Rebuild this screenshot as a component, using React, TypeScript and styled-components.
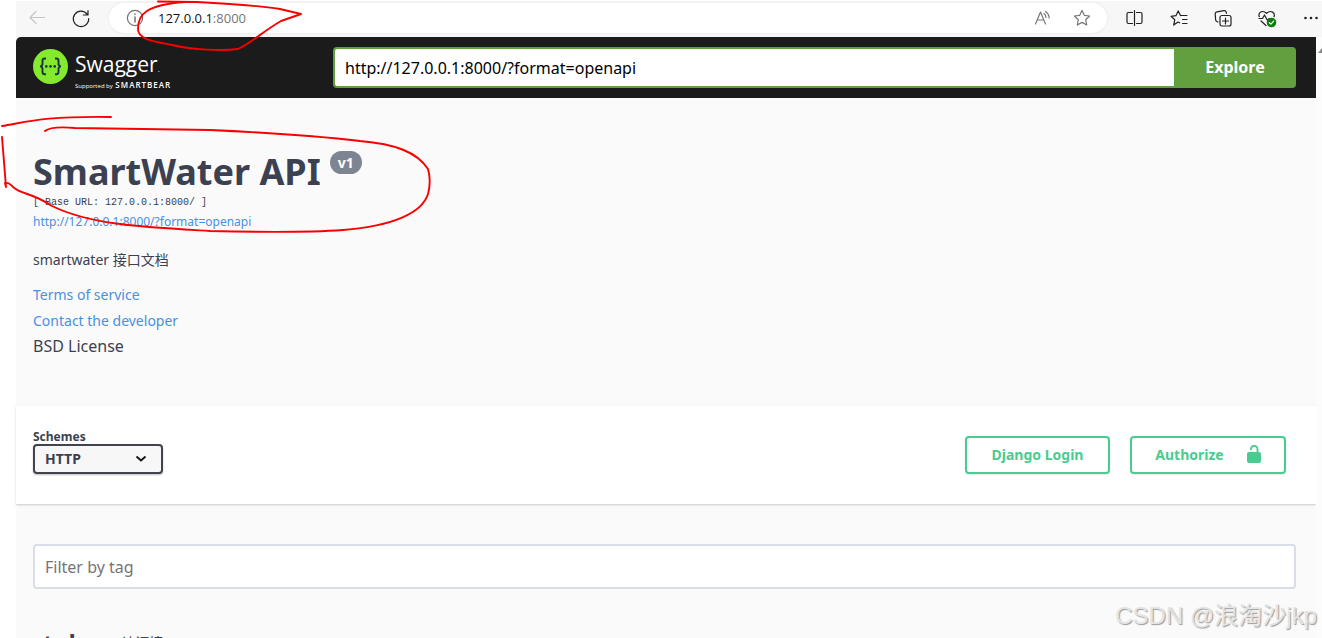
import React from 'react';
import styled, { createGlobalStyle } from 'styled-components';

const GlobalStyle = createGlobalStyle`
  * { box-sizing: border-box; }
  html { overflow: hidden; }
  body {
    margin: 0;
    background: #fff;
    color: #3b4151;
    font-family: "Noto Sans", "Noto Sans CJK SC", sans-serif;
  }
  button, input, select { font-family: inherit; }
`;

const Page = styled.div`
  position: relative;
  height: 100vh;
  overflow: hidden;
  padding: 1px 0 0 16px;
`;

const BrowserBar = styled.header`
  display: flex;
  align-items: center;
  height: 36px;
  padding: 0 1px 0 11px;
  background: #f7f7f7;
`;

const IconButton = styled.button<{ $gap?: number }>`
  display: flex;
  align-items: center;
  justify-content: center;
  flex: none;
  width: 20px;
  height: 20px;
  margin-right: ${(p) => p.$gap ?? 0}px;
  padding: 0;
  border: 0;
  background: none;
`;

const AddressBar = styled.div`
  display: flex;
  align-items: center;
  flex: 1;
  height: 30px;
  margin: 0 17px 2px 0;
  padding: 0 15px 0 16px;
  border-radius: 15px;
  background: #fff;
  box-shadow: 0 0 3px rgba(0, 0, 0, 0.08);
`;

const Address = styled.span`
  flex: 1;
  margin-left: 13px;
  color: #767676;
  font-family: "Open Sans", sans-serif;
  font-size: 13px;
  b { color: #111; font-weight: 400; }
`;

const Row = styled.div`
  display: flex;
`;

const Document = styled.div`
  flex: 1;
  min-width: 0;
  background: #fafafa;
`;

const ScrollTrack = styled.div`
  width: 6px;
  padding-top: 11px;
  overflow: hidden;
  background: #fcfcfc;
  svg { display: block; }
`;

const TopBar = styled.div`
  display: flex;
  align-items: center;
  height: 61px;
  padding: 0 20px 0 17px;
  border-top-left-radius: 5px;
  background: #1b1b1b;
`;

const Brand = styled.a`
  display: flex;
  width: 300px;
  gap: 7px;
  color: #fff;
  text-decoration: none;
`;

const BrandText = styled.span`
  display: flex;
  flex-direction: column;
  padding-top: 6px;
`;

const BrandName = styled.span`
  font-family: "Open Sans", sans-serif;
  font-size: 21px;
  line-height: 24px;
  small { font-size: 8px; }
`;

const BrandNote = styled.span`
  font-family: "Open Sans", sans-serif;
  font-size: 6px;
  line-height: 8px;
  white-space: nowrap;
  b { margin-left: 1px; font-size: 8px; font-weight: 600; letter-spacing: 1px; }
`;

const SpecForm = styled.form`
  display: flex;
  flex: 1;
  height: 41px;
`;

const SpecInput = styled.input`
  flex: 1;
  min-width: 0;
  padding: 0 10px;
  border: 2px solid #62a03f;
  border-right: 0;
  border-radius: 4px 0 0 4px;
  background: #fff;
  color: #000;
  font-size: 16px;
`;

const ExploreButton = styled.button`
  width: 122px;
  padding: 0 0 2px;
  border: 0;
  border-radius: 0 4px 4px 0;
  background: #62a03f;
  color: #fff;
  font-size: 16px;
  font-weight: 700;
`;

const Info = styled.section`
  display: flex;
  flex-direction: column;
  align-items: flex-start;
  height: 308px;
  padding: 50px 17px 0;
`;

const Title = styled.h1`
  display: flex;
  align-items: flex-start;
  gap: 9px;
  margin: 0;
  font-size: 36px;
  line-height: 48px;
  font-weight: 700;
`;

const Version = styled.small`
  height: 23px;
  margin-top: 3px;
  padding: 0 8px;
  border-radius: 12px;
  background: #7d8492;
  color: #fff;
  font-size: 14px;
  line-height: 23px;
`;

const BaseUrl = styled.pre`
  margin: 0;
  font-family: "Liberation Mono", monospace;
  font-size: 10px;
  line-height: 14px;
`;

const TextLink = styled.a<{ $size: number; $line: number }>`
  color: #4990e2;
  font-size: ${(p) => p.$size}px;
  line-height: ${(p) => p.$line}px;
  text-decoration: none;
`;

const Description = styled.p`
  margin: 16px 0 12px;
  font-size: 14px;
  line-height: 20px;
`;

const License = styled.span`
  font-size: 16px;
  line-height: 24px;
`;

const SchemeBar = styled.section`
  display: flex;
  justify-content: space-between;
  height: 98px;
  padding: 24px 30px 0 17px;
  background: #fff;
  box-shadow: 0 1px 2px rgba(0, 0, 0, 0.2);
`;

const SchemeLabel = styled.label`
  display: flex;
  flex-direction: column;
  font-size: 12px;
  line-height: 14px;
  font-weight: 700;
`;

const SelectWrap = styled.span`
  display: grid;
  align-items: center;
  width: 130px;
  height: 30px;
  > * { grid-area: 1 / 1; }
  svg { justify-self: end; margin-right: 16px; pointer-events: none; }
`;

const SchemeSelect = styled.select`
  appearance: none;
  width: 100%;
  height: 30px;
  padding: 0 10px 2px;
  border: 2px solid #41444e;
  border-radius: 4px;
  background: #f7f7f7;
  box-shadow: 0 1px 2px rgba(0, 0, 0, 0.25);
  color: #3b4151;
  font-size: 14px;
  font-weight: 700;
`;

const Actions = styled.div`
  display: flex;
  gap: 20px;
  margin-top: 6px;
`;

const OutlineButton = styled.button<{ $width: number }>`
  display: flex;
  align-items: center;
  justify-content: center;
  gap: 23px;
  width: ${(p) => p.$width}px;
  height: 38px;
  padding: 0 0 2px;
  border: 2px solid #49cc90;
  border-radius: 4px;
  background: #fff;
  box-shadow: 0 1px 2px rgba(0, 0, 0, 0.1);
  color: #49cc90;
  font-size: 14px;
  font-weight: 700;
`;

const Operations = styled.section`
  padding: 40px 20px 0 17px;
`;

const FilterInput = styled.input`
  display: block;
  width: 100%;
  height: 45px;
  padding: 0 10px;
  border: 2px solid #d8dde7;
  border-radius: 4px;
  background: #fff;
  font-size: 16px;
  &::placeholder { color: #757575; opacity: 1; }
`;

const Tag = styled.h2`
  display: flex;
  align-items: center;
  gap: 8px;
  margin: 36px 0 0;
  padding: 0 10px;
  font-size: 24px;
  line-height: 36px;
  small { font-size: 14px; font-weight: 400; }
`;

const Annotations = styled.svg`
  position: absolute;
  top: 0;
  left: 0;
  pointer-events: none;
`;

const Watermark = styled.span`
  position: absolute;
  right: 5px;
  bottom: 4px;
  color: #e4e4e4;
  font-family: "Liberation Sans", "Noto Sans CJK SC", sans-serif;
  font-size: 24px;
  line-height: 36px;
  text-shadow: 1px 1px 1px #999;
`;

type IconProps = { children: React.ReactNode; color?: string; size?: number };
const Icon = ({ children, color = '#222', size = 20 }: IconProps) => (
  <svg width={size} height={size} viewBox="0 0 20 20" fill="none" stroke={color} strokeWidth="1.2" strokeLinecap="round" strokeLinejoin="round" aria-hidden="true">
    {children}
  </svg>
);

const star = 'M10 2.4l2.3 4.9 5.3.7-3.9 3.7 1 5.3-4.7-2.6L5.3 17l1-5.3L2.4 8l5.3-.7z';

export default function App() {
  return (
    <>
      <GlobalStyle />
      <Page>
        <BrowserBar>
          <IconButton $gap={24} aria-label="Back">
            <Icon color="#c6c6c6"><path d="M17.500 8.500H3M9 2.500L3 8.500l6 6" /></Icon>
          </IconButton>
          <IconButton $gap={18} aria-label="Reload">
            <Icon><path d="M16.300 5.400A7.700 7.700 0 1 0 17.700 9.500M17 1.500v4.500h-4.600" /></Icon>
          </IconButton>
          <AddressBar>
            <IconButton aria-label="Site information">
              <Icon color="#707070"><circle cx="10" cy="10" r="7.6" /><path d="M10 9v5M10 6v.4" strokeWidth="1.5" /></Icon>
            </IconButton>
            <Address><b>127.0.0.1</b>:8000</Address>
            <IconButton $gap={20} aria-label="Read aloud">
              <Icon color="#767676"><path d="M3.500 16L8.500 4l5 12M5.200 12h6.600M12 5.500q2 1.600 2 4M13.500 3.500q3.600 2.500 3.600 6.500" /></Icon>
            </IconButton>
            <IconButton aria-label="Add to favorites">
              <Icon color="#767676"><path d={star} /></Icon>
            </IconButton>
          </AddressBar>
          <IconButton $gap={25} aria-label="Split screen">
            <Icon><path d="M8.500 3.500h-4A1.500 1.500 0 0 0 3 5v8a1.500 1.500 0 0 0 1.500 1.500h4M12.500 3.500h4A1.500 1.500 0 0 1 18 5v8a1.500 1.500 0 0 1-1.500 1.500h-4M10.500 1.500v15" /></Icon>
          </IconButton>
          <IconButton $gap={24} aria-label="Favorites">
            <Icon><path d="M12 6.500h6M13.500 10.500h4.500M13.500 14.500h4.500M10.700 13.800L9 13 4.700 16.100 5.800 10.700 2 7.300 6.900 6.700 9.200 1.900 11.500 6.500" /></Icon>
          </IconButton>
          <IconButton $gap={24} aria-label="Collections">
            <Icon><rect x="7" y="6.500" width="11" height="10.500" rx="2" /><path d="M12.500 9v6M9.500 12h6M5 13L3.800 12.500A2 2 0 0 1 2.600 10.500L2.200 5A2 2 0 0 1 4 2.800L11 1.700A2 2 0 0 1 13.200 3.300L13.500 4.300" /></Icon>
          </IconButton>
          <IconButton $gap={24} aria-label="Browser essentials">
            <Icon>
              <path d="M2.300 7.700C.8 4 5 .3 9.500 4.300 14 .3 18.500 4 17 7.700M2 9.500h3.500L7.500 6l3 5.500L12 9.500h2M4 12l5 4.500" />
              <circle cx="14.500" cy="13.500" r="4.800" fill="#107c10" stroke="none" />
              <path d="M12.400 13.700l1.500 1.400 2.800-2.900" stroke="#fff" />
            </Icon>
          </IconButton>
          <IconButton aria-label="More">
            <Icon><g fill="#222" stroke="none"><circle cx="4.500" cy="9" r="1.300" /><circle cx="10" cy="9" r="1.300" /><circle cx="15.500" cy="9" r="1.300" /></g></Icon>
          </IconButton>
        </BrowserBar>
        <Row>
          <Document>
            <TopBar>
              <Brand href="#">
                <svg width="35" height="42" viewBox="0 -3 35 42" aria-hidden="true">
                  <circle cx="17.500" cy="17.500" r="17.500" fill="#85ea2d" />
                  <g fill="none" stroke="#173647" strokeWidth="1.900">
                    <path d="M13 9.500h-1.200q-2.300 0-2.300 2.300v3q0 2.600-2.500 2.600 2.500 0 2.500 2.600v3q0 2.300 2.300 2.300H13M22 9.500h1.200q2.300 0 2.300 2.300v3q0 2.600 2.500 2.600-2.500 0-2.500 2.600v3q0 2.300-2.300 2.300H22" />
                  </g>
                  <g fill="#173647"><circle cx="13.300" cy="17.400" r="1.300" /><circle cx="17.500" cy="17.400" r="1.300" /><circle cx="21.700" cy="17.400" r="1.300" /></g>
                </svg>
                <BrandText>
                  <BrandName>Swagger<small>.</small></BrandName>
                  <BrandNote>Supported by <b>SMARTBEAR</b></BrandNote>
                </BrandText>
              </Brand>
              <SpecForm onSubmit={(e) => e.preventDefault()}>
                <SpecInput aria-label="Specification URL" defaultValue="http://127.0.0.1:8000/?format=openapi" />
                <ExploreButton>Explore</ExploreButton>
              </SpecForm>
            </TopBar>
            <Info>
              <Title>SmartWater API<Version>v1</Version></Title>
              <BaseUrl>[ Base URL: 127.0.0.1:8000/ ]</BaseUrl>
              <TextLink $size={12} $line={24} href="#">http://127.0.0.1:8000/?format=openapi</TextLink>
              <Description>smartwater 接口文档</Description>
              <TextLink $size={14} $line={26} href="#">Terms of service</TextLink>
              <TextLink $size={14} $line={26} href="#">Contact the developer</TextLink>
              <License>BSD License</License>
            </Info>
            <SchemeBar>
              <SchemeLabel>
                Schemes
                <SelectWrap>
                  <SchemeSelect><option>HTTP</option></SchemeSelect>
                  <svg width="12" height="8" viewBox="0 0 12 8" fill="none" stroke="#111" strokeWidth="1.800"><path d="M1.500 1.500L6 5.500l4.500-4" /></svg>
                </SelectWrap>
              </SchemeLabel>
              <Actions>
                <OutlineButton $width={145}>Django Login</OutlineButton>
                <OutlineButton $width={156}>
                  Authorize
                  <svg width="14" height="18" viewBox="0 0 14 18" aria-hidden="true">
                    <rect y="7" width="14" height="11" rx="2" fill="#49cc90" />
                    <path d="M4 5V4a3 3 0 0 1 6.500 0v4" fill="none" stroke="#49cc90" strokeWidth="1.900" />
                  </svg>
                </OutlineButton>
              </Actions>
            </SchemeBar>
            <Operations>
              <FilterInput aria-label="Filter by tag" placeholder="Filter by tag" />
              <Tag>token <small>认证接口</small></Tag>
            </Operations>
          </Document>
          <ScrollTrack>
            <svg width="6" height="5" viewBox="0 0 6 5"><path d="M2 5L6 0v5z" fill="#888" /></svg>
          </ScrollTrack>
        </Row>
        <Annotations width="440" height="240" viewBox="0 0 440 240" fill="none" stroke="#f80000" strokeWidth="1.900" strokeLinecap="round" strokeLinejoin="round" aria-hidden="true">
          <path d="M158 1.500L197 2C237 4 267 7 280 9L301 14 281 21C262 32 253 42 238 49 222 51 193 50 172 45 152 41 138 39 138 29 138 14 146 5 185 2" />
          <path d="M2 126C27 122 43 116 111 117" />
          <path d="M2 137L6 187 5 183Q9 182 13 187C22 195 31 192 52 206 91 225 142 227 210 231 252 232 315 232 343 230 393 226 422 213 428 194 431 183 430 176 428 169 417 152 395 144 360 141 310 135 255 132 210 130L75 128Q51 126 45 131" />
        </Annotations>
        <Watermark>CSDN @浪淘沙jkp</Watermark>
      </Page>
    </>
  );
}
